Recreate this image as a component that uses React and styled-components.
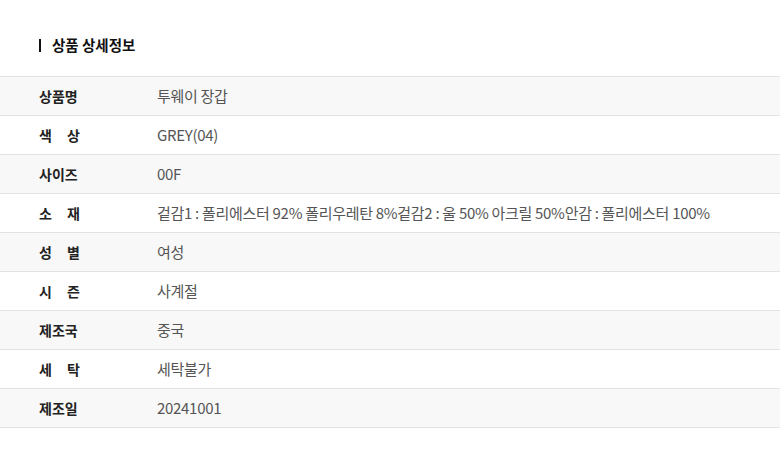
import React from "react";
import styled, { createGlobalStyle } from "styled-components";

const Global = createGlobalStyle`
  html, body { margin: 0; padding: 0; background: #fff; }
  body { font-family: "Noto Sans CJK KR", "Noto Sans", sans-serif; }
`;

const Wrap = styled.div`
  width: 780px;
  padding-top: 35px;
`;

const Title = styled.h2`
  margin: 0 0 21px 39px;
  display: flex;
  align-items: center;
  gap: 11px;
  font-size: 14.5px;
  font-weight: 700;
  line-height: 20px;
  color: #111;
  &::before {
    content: "";
    width: 2px;
    height: 13px;
    background: #111;
  }
`;

const Table = styled.div`
  border-top: 1px solid #e2e2e2;
`;

const Row = styled.div`
  display: flex;
  align-items: center;
  height: 39px;
  box-sizing: border-box;
  border-bottom: 1px solid #e2e2e2;
  background: ${(p) => (p.$shade ? "#f8f8f8" : "#fff")};
  font-size: 14px;
  line-height: 20px;
`;

const Label = styled.div`
  width: 41px;
  margin-left: 39px;
  margin-right: 77px;
  font-weight: 700;
  color: #222;
  text-align: justify;
  text-align-last: justify;
  white-space: nowrap;
`;

const Value = styled.div`
  color: #555;
  white-space: nowrap;
  font-size: 15px;
  letter-spacing: -0.3px;
`;

const rows = [
  ["상품명", "투웨이 장갑"],
  ["색 상", "GREY(04)"],
  ["사이즈", "00F"],
  ["소 재", "겉감1 : 폴리에스터 92% 폴리우레탄 8%겉감2 : 울 50% 아크릴 50%안감 : 폴리에스터 100%"],
  ["성 별", "여성"],
  ["시 즌", "사계절"],
  ["제조국", "중국"],
  ["세 탁", "세탁불가"],
  ["제조일", "20241001"],
];

export default function App() {
  return (
    <>
      <Global />
      <Wrap>
        <Title>상품 상세정보</Title>
        <Table>
          {rows.map(([k, v], i) => (
            <Row key={k} $shade={i % 2 === 0}>
              <Label>{k}</Label>
              <Value>{v}</Value>
            </Row>
          ))}
        </Table>
      </Wrap>
    </>
  );
}
